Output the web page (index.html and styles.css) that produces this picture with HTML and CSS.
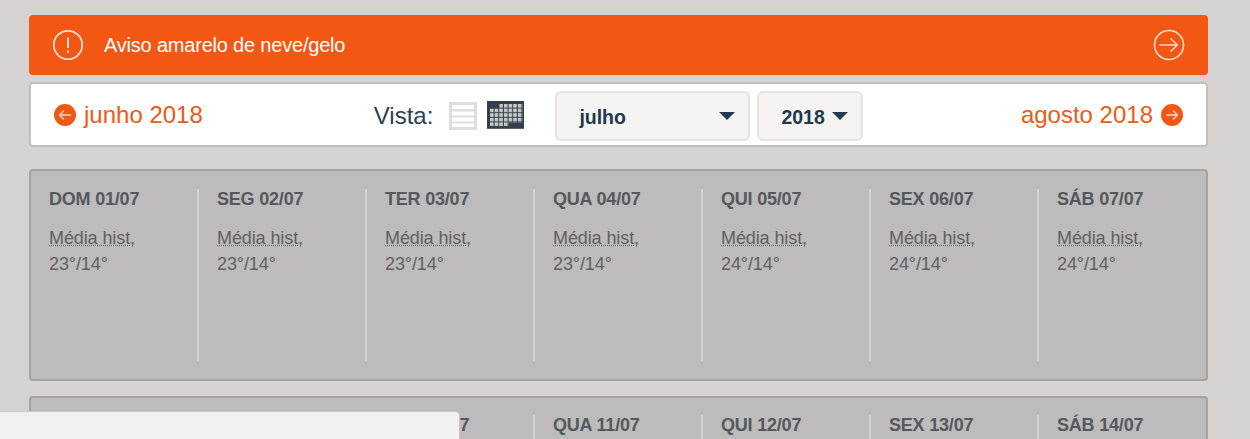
FILE: index.html
```html
<!DOCTYPE html>
<html lang="pt">
<head>
<meta charset="UTF-8">
<title>Previsão mensal</title>
<link rel="stylesheet" href="styles.css">
</head>
<body>
	<!-- aviso -->
	<div class="alert">
		<svg class="alert-icon" width="32" height="32" viewBox="0 0 32 32">
			<circle cx="16" cy="16" r="14.2" fill="none" stroke="#fbe0d3" stroke-width="1.8"/>
			<path d="M16 8.5V19" stroke="#fbe0d3" stroke-width="2" fill="none"/>
			<rect x="15" y="21.5" width="2" height="2.4" fill="#fbe0d3"/>
		</svg>
		<span class="alert-text">Aviso amarelo de neve/gelo</span>
		<svg class="alert-go" width="32" height="32" viewBox="0 0 32 32">
			<circle cx="16" cy="16" r="14.5" fill="none" stroke="#fbe0d3" stroke-width="1.6"/>
			<path d="M6.5 16H24M17.5 9.5L24.5 16L17.5 22.5" stroke="#fbe0d3" stroke-width="1.4" fill="none"/>
		</svg>
	</div>

	<!-- navegacao -->
	<div class="nav">
		<a class="nav-link">
			<svg width="22" height="22" viewBox="0 0 22 22">
				<circle cx="11" cy="11" r="11" fill="#f25814"/>
				<path d="M17 11H5.5M10 6.5L5.5 11L10 15.5" stroke="#fcd9c8" stroke-width="1.3" fill="none"/>
			</svg>
			junho 2018
		</a>
		<div class="nav-mid">
			<span class="view-label">Vista:</span>
			<svg class="view-list" width="28" height="28" viewBox="0 0 28 28">
				<rect width="28" height="28" fill="#e0dddd"/>
				<rect x="3" y="3" width="22" height="4" fill="#fff"/>
				<rect x="3" y="9.500" width="22" height="4" fill="#fff"/>
				<rect x="3" y="15.500" width="22" height="4" fill="#fff"/>
				<rect x="3" y="21.500" width="22" height="3.500" fill="#fff"/>
			</svg>
			<svg class="view-cal" width="37" height="28" viewBox="0 0 37 28">
				<defs>
					<pattern id="cells" width="4.640" height="4.600" patternUnits="userSpaceOnUse" x="3" y="3">
						<rect width="3.600" height="3.600" fill="#c9c8c7"/>
					</pattern>
				</defs>
				<rect width="37" height="28" fill="#333f4b"/>
				<path d="M12.300 3H35.500V21.400H21.600V26H3V7.600H12.300Z" fill="url(#cells)"/>
				<rect y="27" width="37" height="1" fill="#5c6670"/>
			</svg>
			<div class="pick pick-month">julho<i class="caret"></i></div>
			<div class="pick pick-year">2018<i class="caret"></i></div>
		</div>
		<a class="nav-link nav-next">
			agosto 2018
			<svg width="22" height="22" viewBox="0 0 22 22">
				<circle cx="11" cy="11" r="11" fill="#f25814"/>
				<path d="M5 11H16.500M12 6.500L16.500 11L12 15.500" stroke="#fcd9c8" stroke-width="1.300" fill="none"/>
			</svg>
		</a>
	</div>

	<!-- semanas -->
	<div class="week">
		<div class="day"><b>DOM 01/07</b><p><abbr>Média hist</abbr>,<br>23°/14°</p></div>
		<div class="day"><b>SEG 02/07</b><p><abbr>Média hist</abbr>,<br>23°/14°</p></div>
		<div class="day"><b>TER 03/07</b><p><abbr>Média hist</abbr>,<br>23°/14°</p></div>
		<div class="day"><b>QUA 04/07</b><p><abbr>Média hist</abbr>,<br>23°/14°</p></div>
		<div class="day"><b>QUI 05/07</b><p><abbr>Média hist</abbr>,<br>24°/14°</p></div>
		<div class="day"><b>SEX 06/07</b><p><abbr>Média hist</abbr>,<br>24°/14°</p></div>
		<div class="day"><b>SÁB 07/07</b><p><abbr>Média hist</abbr>,<br>24°/14°</p></div>
	</div>
	<div class="week week-next">
		<div class="day"><b>DOM 08/07</b></div>
		<div class="day"><b>SEG 09/07</b></div>
		<div class="day"><b>TER 10/07</b></div>
		<div class="day"><b>QUA 11/07</b></div>
		<div class="day"><b>QUI 12/07</b></div>
		<div class="day"><b>SEX 13/07</b></div>
		<div class="day"><b>SÁB 14/07</b></div>
	</div>

	<!-- caixa por cima da pagina -->
	<div class="popup"></div>
</body>
</html>
```

FILE: styles.css
```css
html, body { height: 439px; overflow: hidden; }
body { margin: 0; padding: 15px 42px 0 29px; box-sizing: border-box; background-color: #d7d3d3; font-family: "Liberation Sans", Arial, sans-serif; position: relative; }

/* aviso */
.alert { height: 60px; background-color: #f25814; border-radius: 4px; display: flex; align-items: center; padding: 0 23px; color: #fff; }
.alert-text { font-size: 20px; margin-left: 20px; letter-spacing: -0.2px; }
.alert-go { margin-left: auto; }

/* navegacao */
.nav { height: 65px; box-sizing: border-box; margin-top: 7px; background-color: #fff; border: 2px solid #c1bfbf; border-radius: 4px; display: flex; align-items: center; padding: 3px 23px 0; }
.nav-link { display: flex; align-items: center; gap: 8px; color: #f25814; font-size: 24px; margin-top: -2px; }
.nav-next { margin-left: auto; }
.nav-mid { display: flex; align-items: center; margin-left: 171px; }
.view-label { color: #2a3f54; font-size: 24px; margin-right: 16px; }
.view-cal { margin: 0 31px 2px 10px; }
.pick { height: 50px; box-sizing: border-box; background-color: #f5f4f3; border: 2px solid #e5e3e3; border-radius: 6px; display: flex; align-items: center; justify-content: space-between; color: #22384c; font-weight: bold; font-size: 19.5px; }
.pick-month { width: 195px; padding: 2px 13px 0 22px; }
.pick-year { width: 106px; margin-left: 7px; padding: 2px 13px 0 22px; }
.caret { width: 0; height: 0; margin-top: -3px; border-left: 8px solid transparent; border-right: 8px solid transparent; border-top: 8px solid #22384c; }

/* semanas */
.week { height: 212px; box-sizing: border-box; margin-top: 22px; background-color: #bdbbbb; border: 2px solid #a5a3a3; border-radius: 4px; display: grid; grid-template-columns: repeat(7, 168px); padding-top: 18px; color: #54595d; }
.week-next { margin-top: 15px; padding-top: 17px; }
.day { height: 172px; box-sizing: border-box; padding-left: 18px; border-right: 2px solid #d3d1d1; }
.day:last-child { border-right: 0; }
.day b { display: block; line-height: 20px; font-size: 18px; letter-spacing: -0.2px; }
.day p { margin: 16px 0 0; font-size: 18px; letter-spacing: -0.1px; line-height: 26px; color: #5d6164; }
abbr { text-decoration: underline dotted; text-decoration-thickness: 1px; text-underline-offset: 1px; }

/* caixa */
.popup { position: absolute; left: 0; top: 411px; width: 460px; height: 28px; box-sizing: border-box; background-color: #f1f1f1; border: 1px solid #c9c7c7; border-width: 1px 1px 0 0; border-radius: 0 5px 0 0; }
```
